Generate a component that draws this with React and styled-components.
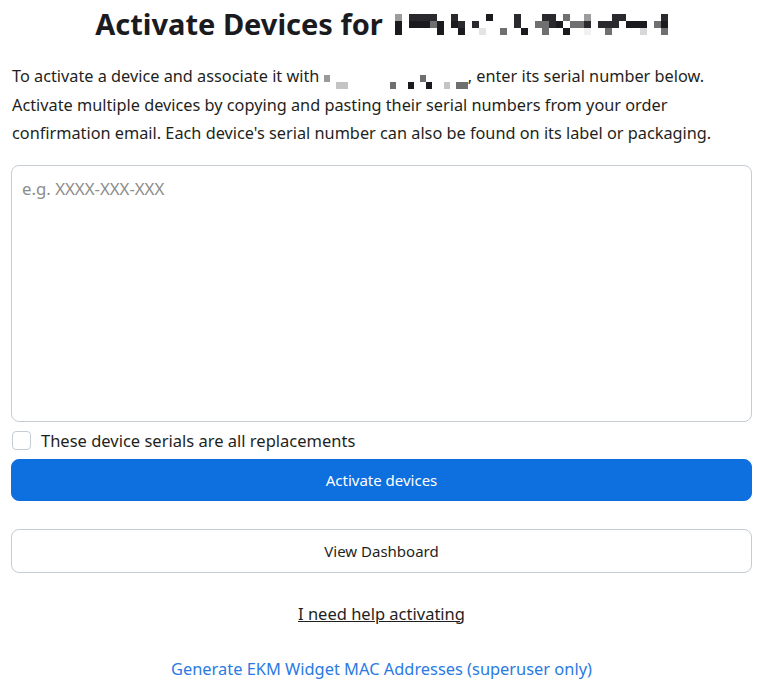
import styled, { createGlobalStyle } from "styled-components";

const GlobalStyle = createGlobalStyle`
  body {
    margin: 0;
    background: #ffffff;
    font-family: "Noto Sans", "Open Sans", sans-serif;
    color: #1f1f22;
  }
`;

// pixelated name in the title, one string per row, digit = grey level
const titleCells = [
  "1.4444..4....0...4...44.3..1...44.....4",
  "0.00030.04.4.....4..3340.334.444.000.30",
  "0.....0..0..8..3..0..3..0..9..3....2..3",
];
const textCells = ["7...............3......", "..55.......3..0..0..5.33"];

const shade = (c) =>
  ({
    0: "#1b1b1f",
    1: "#9c9c9c",
    2: "#d8d8d8",
    3: "#6f6f6f",
    4: "#2a2a2e",
    5: "#c4c4c4",
    7: "#9a9a9a",
    8: "#e4e4e4",
    9: "#f1f1f1",
  }[c] || "transparent");

const Redacted = ({ rows, size, inline }) => (
  <Pixels $inline={inline}>
    {rows.map((row, i) => (
      <PixelRow key={i}>
        {row.split("").map((c, j) => (
          <Pixel key={j} $size={size} style={{ background: shade(c) }} />
        ))}
      </PixelRow>
    ))}
  </Pixels>
);

const App = () => {
  return (
    <Page>
      <GlobalStyle />
      <Title>
        Activate Devices for <Redacted rows={titleCells} size={7} />
      </Title>
      <Intro>
        To activate a device and associate it with{" "}
        <Redacted rows={textCells} size={6} inline />, enter its serial number
        below.
        <br />
        Activate multiple devices by copying and pasting their serial numbers
        from your order
        <br />
        confirmation email. Each device's serial number can also be found on
        its label or packaging.
      </Intro>
      <SerialInput placeholder="e.g. XXXX-XXX-XXX" />
      <CheckRow>
        <Box type="checkbox" />
        These device serials are all replacements
      </CheckRow>
      <Button $primary>Activate devices</Button>
      <Button>View Dashboard</Button>
      <HelpLink>I need help activating</HelpLink>
      <AdminLink>Generate EKM Widget MAC Addresses (superuser only)</AdminLink>
    </Page>
  );
};

//Styled Components

const Page = styled.div`
  display: flex;
  flex-direction: column;
  padding: 0 11px 0 11px;
`;

const Title = styled.h1`
  font-size: 29px;
  font-weight: 700;
  text-align: center;
  margin: 7px 0 21px 0;
  line-height: 34px;
  display: flex;
  justify-content: center;
  align-items: center;
  gap: 12px;
  color: #1b1b1f;
`;

const Pixels = styled.span`
  display: inline-flex;
  flex-direction: column;
  vertical-align: ${(p) => (p.$inline ? "baseline" : "middle")};
  margin-bottom: ${(p) => (p.$inline ? "-1px" : "0")};
`;

const PixelRow = styled.span`
  display: flex;
`;

const Pixel = styled.span`
  width: ${(p) => p.$size}px;
  height: 7px;
`;

const Intro = styled.p`
  font-size: 16.3px;
  line-height: 28.5px;
  margin: 0 0 17px 1px;
  color: #1f1f22;
  white-space: nowrap;
`;

const SerialInput = styled.textarea`
  box-sizing: border-box;
  height: 257px;
  width: 100%;
  border: 1px solid #c6ccd3;
  border-radius: 8px;
  padding: 11px 10px;
  font-family: inherit;
  font-size: 16.8px;
  resize: none;
  &::placeholder {
    color: #8c8c8c;
  }
`;

const CheckRow = styled.label`
  display: flex;
  align-items: center;
  gap: 10px;
  font-size: 16.5px;
  line-height: 20px;
  margin: 9px 0 8px 1px;
  color: #1f1f22;
`;

const Box = styled.input`
  appearance: none;
  margin: 0;
  width: 19px;
  height: 19px;
  border: 1px solid #c6ccd3;
  border-radius: 4px;
  background: #fff;
`;

const Button = styled.button`
  height: ${(p) => (p.$primary ? 42 : 44)}px;
  border-radius: 8px;
  font-family: inherit;
  font-size: 15px;
  border: 1px solid ${(p) => (p.$primary ? "#0e6fdf" : "#c6ccd3")};
  background: ${(p) => (p.$primary ? "#0e6fdf" : "#ffffff")};
  color: ${(p) => (p.$primary ? "#ffffff" : "#1f1f22")};
  margin-bottom: ${(p) => (p.$primary ? 28 : 29)}px;
`;

const HelpLink = styled.a`
  align-self: center;
  font-size: 16.5px;
  line-height: 24px;
  color: #1f1f22;
  text-decoration: underline;
  margin: 0 0 31px 0;
`;

const AdminLink = styled.a`
  align-self: center;
  font-size: 16.4px;
  line-height: 24px;
  color: #2a7ae2;
`;

export default App;
